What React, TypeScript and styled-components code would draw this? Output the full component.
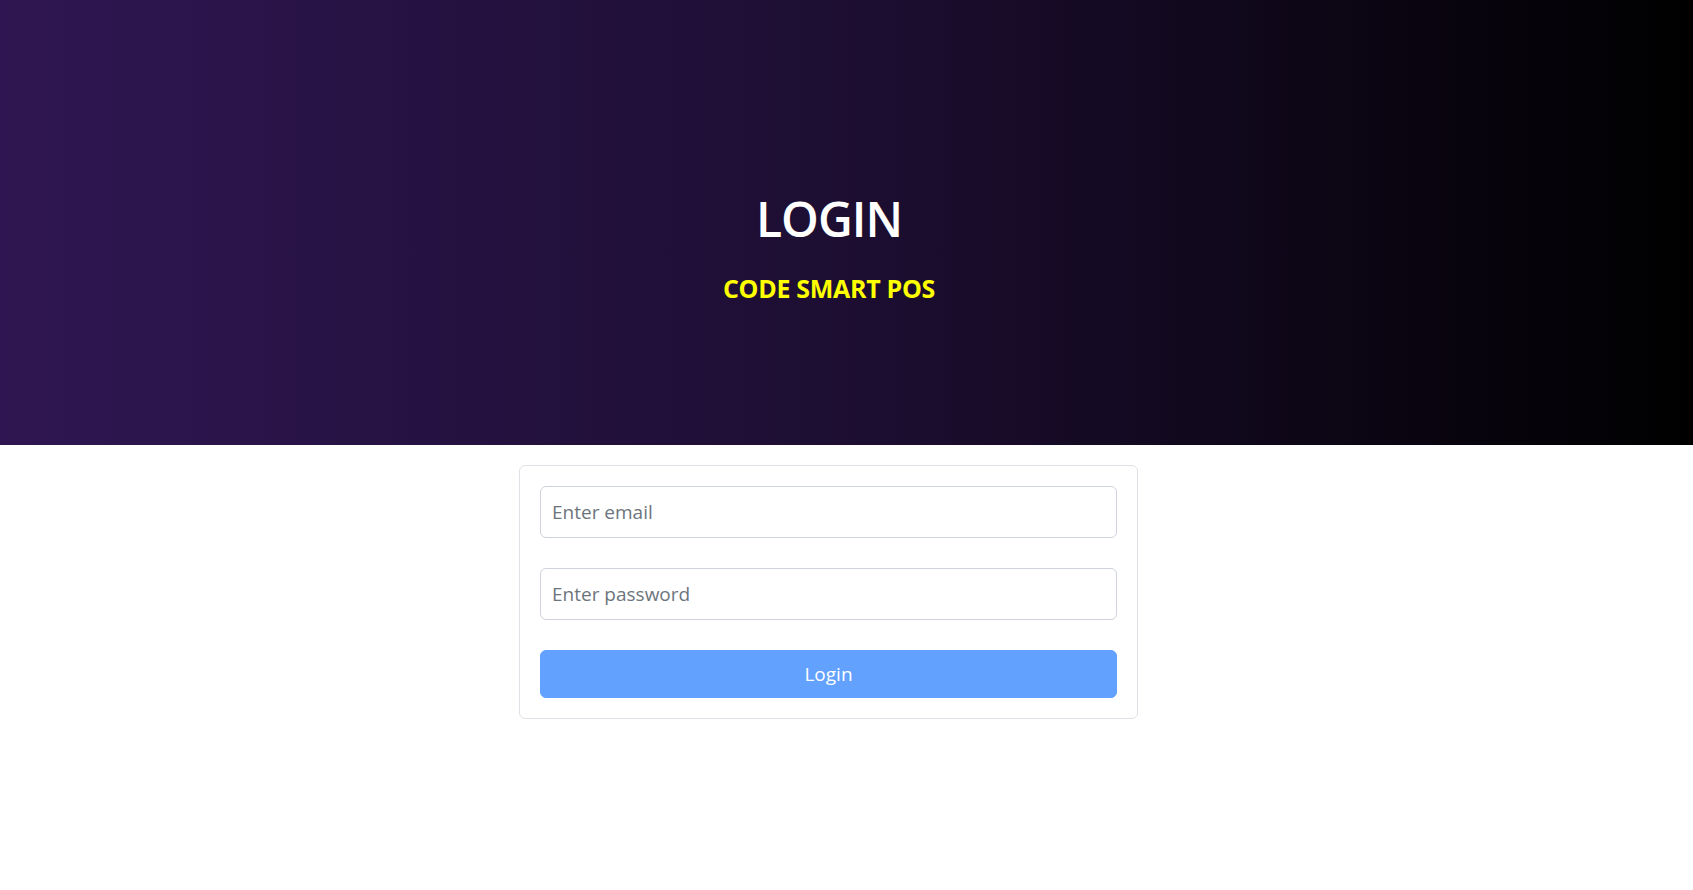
import React from "react";
import styled, { createGlobalStyle } from "styled-components";

const GlobalStyle = createGlobalStyle`
  * { box-sizing: border-box; }
  html, body { margin: 0; padding: 0; background: #ffffff; }
  body {
    font-family: "Open Sans", "Noto Sans", "Liberation Sans", sans-serif;
    color: #212529;
  }
`;

const Page = styled.div`
  width: 100%;
  min-height: 890px;
  display: flex;
  flex-direction: column;
`;

const Hero = styled.header`
  height: 445px;
  background: linear-gradient(to right, #2f1652 0%, #1d0e32 50%, #000000 100%);
  display: flex;
  flex-direction: column;
  align-items: center;
  padding: 190px 35px 0 0;
`;

const Title = styled.h1`
  margin: 0;
  font-size: 48px;
  font-weight: 600;
  line-height: 1.2;
  color: #ffffff;
  letter-spacing: -1px;
`;

const Subtitle = styled.h4`
  margin: 25px 0 0;
  font-size: 25px;
  font-weight: 700;
  line-height: 1.2;
  color: #ffff00;
  letter-spacing: -0.3px;
`;

const Main = styled.main`
  display: flex;
  justify-content: center;
  padding: 20px 36px 0 0;
`;

const Card = styled.form`
  width: 619px;
  border: 1px solid #dee2e6;
  border-radius: 6px;
  padding: 20px 20px 20px;
  display: flex;
  flex-direction: column;
  gap: 30px;
`;

const Input = styled.input`
  display: block;
  width: 100%;
  height: 52px;
  padding: 10px 11px;
  font-family: inherit;
  font-size: 19px;
  line-height: 30px;
  color: #212529;
  background: #ffffff;
  border: 1px solid #ced4da;
  border-radius: 6px;
  outline: none;
  &::placeholder { color: #6c757d; }
`;

const Button = styled.button`
  display: block;
  width: 100%;
  height: 48px;
  margin-top: 0;
  font-family: inherit;
  font-size: 19px;
  line-height: 30px;
  color: #ffffff;
  background: #62a1fe;
  border: 1px solid #62a1fe;
  border-radius: 6px;
  cursor: default;
`;

export default function App() {
  return (
    <Page>
      <GlobalStyle />
      <Hero>
        <Title>LOGIN</Title>
        <Subtitle>CODE SMART POS</Subtitle>
      </Hero>
      <Main>
        <Card onSubmit={(e) => e.preventDefault()}>
          <Input type="email" placeholder="Enter email" />
          <Input type="password" placeholder="Enter password" />
          <Button type="submit">Login</Button>
        </Card>
      </Main>
    </Page>
  );
}
